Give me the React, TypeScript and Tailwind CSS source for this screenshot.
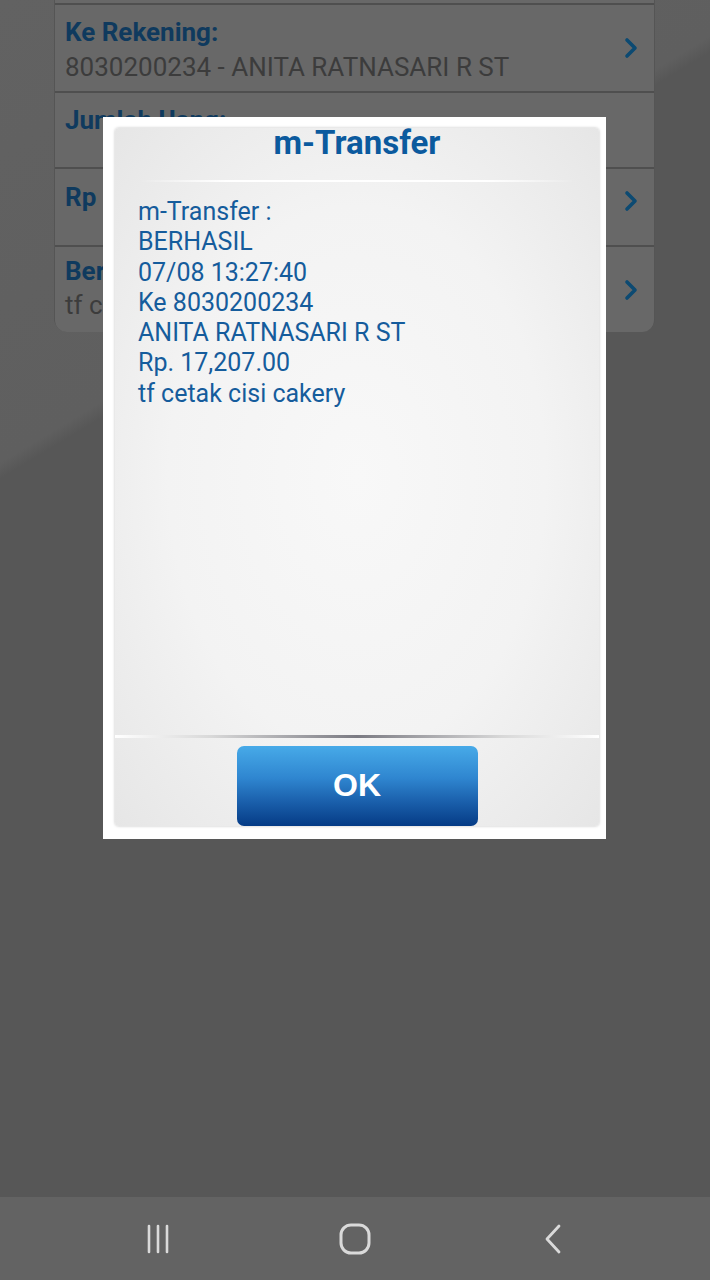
import React from "react";

const Chevron = () => (
  <svg width="16" height="24" viewBox="0 0 16 24" className="shrink-0">
    <path d="M4 4 L12 12 L4 20" fill="none" stroke="#0c4a72" strokeWidth="3.6" strokeLinecap="round" strokeLinejoin="round" />
  </svg>
);

export default function App() {
  const body = [
    "m-Transfer :",
    "BERHASIL",
    "07/08 13:27:40",
    "Ke 8030200234",
    "ANITA RATNASARI R ST",
    "Rp. 17,207.00",
    "tf cetak cisi cakery",
  ];
  return (
    <div
      className="relative w-[710px] h-[1280px] overflow-hidden flex flex-col"
      style={{ fontFamily: "Roboto, 'Liberation Sans', sans-serif" }}
    >
      {/* dimmed app background */}
      <div className="flex-1 bg-[linear-gradient(329deg,#575757_70.5%,#5f5f5f_71.5%,#626262_100%)]">
        <div className="ml-[54px] w-[601px] flex flex-col bg-[#4f4f4f] gap-[2px] rounded-b-[14px] border-x border-[#555]">
          <div className="h-[3px] bg-[#686868]" />
          <div className="h-[86px] bg-[#686868] flex items-center pl-[10px] pr-[15px]">
            <div className="flex-1 flex flex-col">
              <span className="text-[26px] leading-[30px] font-bold text-[#0f3a5e] mt-[4px]">Ke Rekening:</span>
              <span className="text-[26px] leading-[34px] text-[#3c3c3c] mt-[3px]">8030200234 - ANITA RATNASARI R ST</span>
            </div>
            <Chevron />
          </div>
          <div className="h-[74px] bg-[#686868] flex items-start pl-[10px] pr-[15px] pt-[12px]">
            <span className="text-[26px] leading-[30px] font-bold text-[#0f3a5e]">Jumlah Uang:</span>
          </div>
          <div className="h-[76px] bg-[#686868] flex items-start pl-[10px] pr-[15px] pt-[13px]">
            <span className="flex-1 text-[26px] leading-[30px] font-bold text-[#0f3a5e]">Rp</span>
            <div className="mt-[7px]">
              <Chevron />
            </div>
          </div>
          <div className="h-[85px] bg-[#686868] flex items-center pl-[10px] pr-[15px] rounded-b-[12px]">
            <div className="flex-1 flex flex-col">
              <span className="text-[26px] leading-[30px] font-bold text-[#0f3a5e] mt-[-2px]">Berita:</span>
              <span className="text-[26px] leading-[34px] text-[#3c3c3c] mt-[2px]">tf cetak cisi cakery</span>
            </div>
            <Chevron />
          </div>
        </div>
      </div>

      {/* navigation bar */}
      <div className="h-[83px] bg-[#636363] flex items-center justify-around px-[60px]">
        <svg width="40" height="40" viewBox="0 0 40 40">
          <g stroke="#dadada" strokeWidth="2.6" strokeLinecap="round">
            <line x1="11" y1="7" x2="11" y2="33" />
            <line x1="20" y1="7" x2="20" y2="33" />
            <line x1="29" y1="7" x2="29" y2="33" />
          </g>
        </svg>
        <svg width="40" height="40" viewBox="0 0 40 40">
          <rect x="6" y="6" width="28" height="28" rx="10" fill="none" stroke="#dadada" strokeWidth="3" />
        </svg>
        <svg width="40" height="40" viewBox="0 0 40 40">
          <path d="M27 7 L15 20 L27 33" fill="none" stroke="#dadada" strokeWidth="2.8" strokeLinecap="round" strokeLinejoin="round" />
        </svg>
      </div>

      {/* modal dialog */}
      <div className="absolute left-[103px] top-[117px] w-[503px] h-[722px] bg-white pl-[12px] pr-[7px] pt-[11px] pb-[13px]">
        <div className="h-full rounded-[4px] shadow-[0_0_3px_rgba(0,0,0,0.25)] bg-[radial-gradient(ellipse_at_center,#f8f8f8_0%,#f3f3f3_55%,#e6e6e6_100%)] flex flex-col">
          <div className="h-[52px] flex items-start justify-center">
            <span className="text-[33px] leading-[36px] font-bold text-[#0b5a9e] mt-[-3px]">m-Transfer</span>
          </div>
          <div className="mx-[25px] h-[2px] bg-[linear-gradient(90deg,transparent,#ffffff_20%,#ffffff_80%,transparent)]" />
          <div className="flex-1 pl-[23px] pt-[15px] flex flex-col">
            {body.map((l) => (
              <span key={l} className="text-[25px] leading-[30.3px] text-[#155c9c]">
                {l}
              </span>
            ))}
          </div>
          <div className="h-[3px] bg-[linear-gradient(90deg,#ffffff_0%,#d8d8d8_20%,#7a7a82_50%,#d8d8d8_80%,#ffffff_100%)]" />
          <div className="h-[88px] flex items-end justify-center">
            <div className="w-[241px] h-[80px] rounded-[7px] bg-[linear-gradient(180deg,#47aae8_0%,#2f86d0_40%,#1a5fab_70%,#053b86_100%)] flex items-center justify-center">
              <span
                className="text-[32px] font-bold text-white mt-[-2px]"
                style={{ fontFamily: "'Liberation Sans', Arial, sans-serif" }}
              >
                OK
              </span>
            </div>
          </div>
        </div>
      </div>
    </div>
  );
}
